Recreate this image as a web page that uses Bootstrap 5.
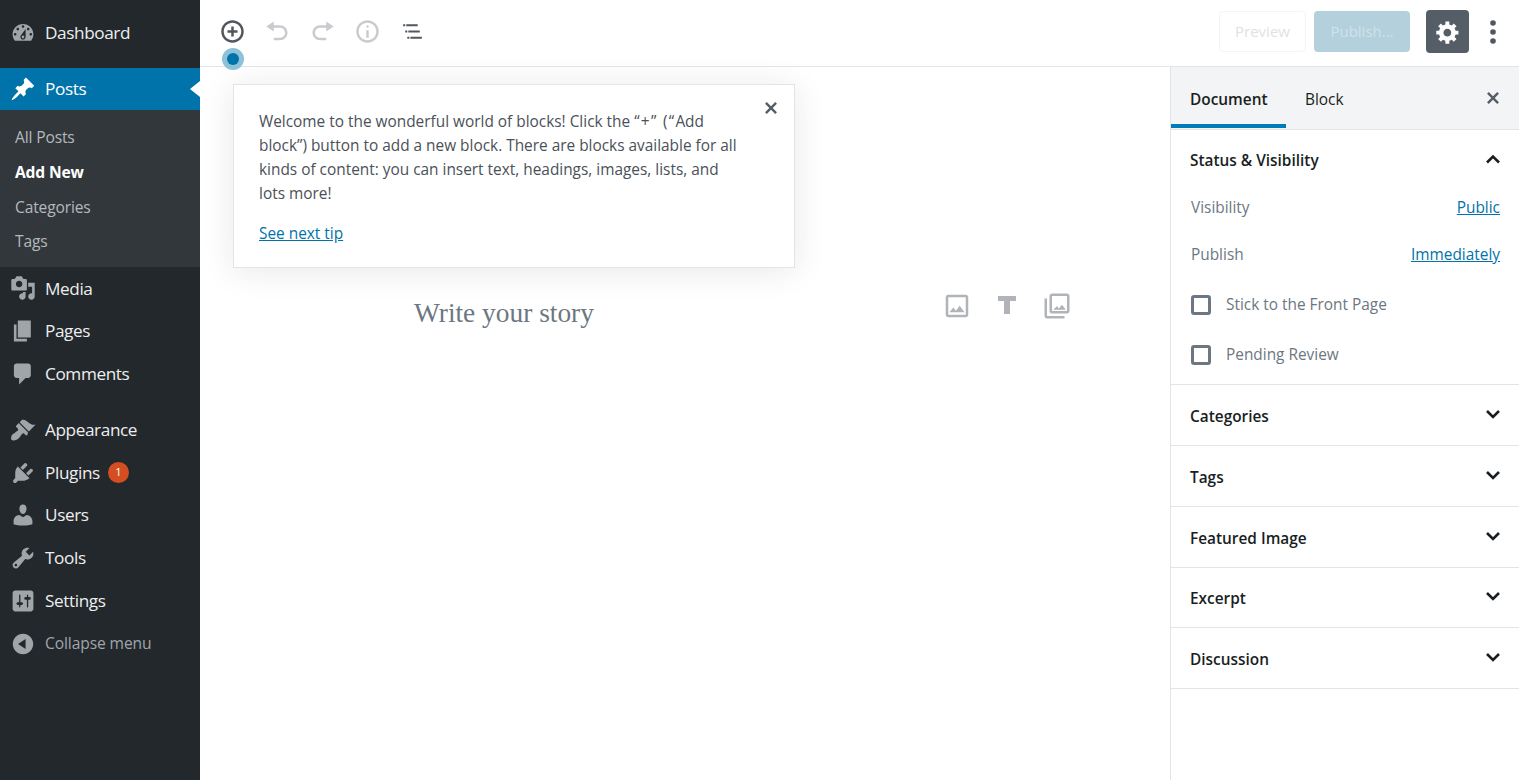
<!DOCTYPE html>
<html lang="en">
<head>
<meta charset="utf-8">
<title>Add New Post</title>
<link href="https://cdn.jsdelivr.net/npm/bootstrap@5.3.0/dist/css/bootstrap.min.css" rel="stylesheet">
<style>
html,body{height:100%;margin:0;overflow:hidden}
body{font-family:"Open Sans","Noto Sans",sans-serif;background:#fff;color:#32373c}
.wp-shell{width:1519px;height:780px}
.wp-side{width:200px;flex:none;background:#23282d;padding-top:12px}
.wp-item{height:42.8px;padding-left:10px;color:#eee;font-size:17.2px;text-decoration:none;letter-spacing:-.4px}
.wp-item.wp-first{height:42px}
.wp-item svg{width:26px;height:26px;fill:#a0a5aa;flex:none;margin-right:9px}
.wp-item.wp-active{background:#0073aa;color:#fff;height:42px;margin-top:14px;position:relative}
.wp-item.wp-active svg{fill:#fff}
.wp-item.wp-active::after{content:"";position:absolute;right:0;top:13px;border:8px solid transparent;border-right-color:#fff;border-left-width:0;border-right-width:10px}
.wp-sub{background:#32373c;padding:10.4px 0 8px 15px;height:157px}
.wp-sub a{display:block;height:34.6px;line-height:34.6px;color:#b4b9be;font-size:15.6px;text-decoration:none;letter-spacing:-.15px}
.wp-sub a.wp-cur{color:#fff;font-weight:700}
.wp-gap{margin-top:13px}
.wp-count{width:21px;height:21px;border-radius:50%;background:#d54e21;color:#fff;font-size:11px;margin-left:8px;letter-spacing:0}
.wp-item.wp-collapse{color:#a0a5aa;font-size:15.6px;letter-spacing:-.1px}
.wp-top{height:67px;border-bottom:1px solid #e2e4e7;flex:none;position:relative;padding:0 16px 0 20px}
.wp-tbtn{width:25px;height:25px;flex:none;margin-right:20px;margin-top:-4px}
.wp-tbtn svg{width:100%;height:100%;display:block}
.wp-dis{fill:#c9cccf}
.wp-dark{fill:#50575e}
.wp-prev{width:87px;height:41px;border:1px solid #f3f4f5;border-radius:4px;color:#e0e2e4;font-size:15px;margin-right:8px;margin-top:-3px}
.wp-pub{width:96px;height:41px;background:#b4d0dc;border-radius:4px;color:#cfe2ea;font-size:15px;margin-right:16px;margin-top:-3px}
.wp-gear{width:43px;height:43px;background:#555d66;border-radius:4px;margin-right:14px;margin-top:-3px}
.wp-gear svg{width:26px;height:26px;fill:#fff}
.wp-more{width:20px;margin-top:-3px}
.wp-beacon{position:absolute;left:22px;top:48px;width:22px;height:22px;border-radius:50%;background:#8dc2d8}
.wp-beacon::after{content:"";position:absolute;left:5px;top:5px;width:12px;height:12px;border-radius:50%;background:#0073aa}
.wp-tip{position:absolute;left:33px;top:84px;width:562px;height:184px;background:#fff;border:1px solid #e2e4e7;box-shadow:0 3px 30px rgba(25,30,35,.1);padding:25px 25px;font-size:15.4px;line-height:24px;color:#4a5158}
.wp-tip a{display:inline-block;margin-top:16px;color:#0073aa}
.wp-quote{letter-spacing:1.3px}
.wp-tip-x{position:absolute;right:11px;top:11px;width:24px;height:24px;fill:#555d66}
.wp-editor{position:relative;padding:232px 98px 0 214px}
.wp-ph{font-family:"Liberation Serif",serif;font-size:27.4px;color:#6c7781;line-height:1;padding-top:1px}
.wp-ins{margin-top:-8px}
.wp-ins svg{width:30px;height:30px;fill:#b0b3b7;display:block;margin-left:20px}
.wp-panel{width:349px;flex:none;border-left:1px solid #e2e4e7;height:100%;position:relative}
.wp-tabs{height:63px;background:#f3f4f5;border-bottom:1px solid #e2e4e7;font-size:15.4px;color:#191e23}
.wp-tab{height:61px;padding:0 19px;line-height:65px;color:#191e23}
.wp-tab.wp-on{font-weight:600;border-bottom:4px solid #007cba;width:115px;white-space:nowrap}
.wp-tabx{position:absolute;right:14px;top:19px;width:24px;height:24px;fill:#555d66}
.wp-sec{border-bottom:1px solid #e2e4e7;height:61px;padding:3px 14px 0 19px;font-size:15.4px;font-weight:600;color:#191e23}
.wp-sec.wp-short{height:60px}
.wp-sec svg{width:24px;height:24px;fill:none;stroke:#191e23;stroke-width:2.6;margin-top:-6px}
.wp-open{height:255px;border-bottom:1px solid #e2e4e7;padding:0 19px 0 19px;font-size:15.4px}
.wp-head{height:61px;font-weight:600;color:#191e23;margin-right:-5px}
.wp-head svg{width:24px;height:24px;fill:none;stroke:#191e23;stroke-width:2.6;margin-top:-3px}
.wp-line{height:47px;color:#6c7781;padding-left:1px;margin-top:-7px;margin-bottom:7px}
.wp-line a{color:#0073aa}
.wp-check{height:50px;color:#6c7781;margin-top:-5px;margin-bottom:5px}
.wp-box{width:20px;height:20px;border:3px solid #6c7781;border-radius:3px;margin-left:1px;margin-right:15px;flex:none}
</style>
</head>
<body>
<div class="wp-shell d-flex">
  <nav class="wp-side d-flex flex-column">
    <a class="wp-item wp-first d-flex align-items-center" href="#"><svg viewBox="0 0 20 20"><path d="M3.76 16h12.48c1.1-1.37 1.76-3.11 1.76-5 0-4.42-3.58-8-8-8s-8 3.58-8 8c0 1.89.66 3.63 1.76 5zM10 4c.55 0 1 .45 1 1s-.45 1-1 1-1-.45-1-1 .45-1 1-1zM6 6c.55 0 1 .45 1 1s-.45 1-1 1-1-.45-1-1 .45-1 1-1zm8 0c.55 0 1 .45 1 1s-.45 1-1 1-1-.45-1-1 .45-1 1-1zm-5.37 5.55L12 7v6c0 1.1-.9 2-2 2s-2-.9-2-2c0-.57.24-1.08.63-1.45zM4 10c.55 0 1 .45 1 1s-.45 1-1 1-1-.45-1-1 .45-1 1-1zm12 0c.55 0 1 .45 1 1s-.45 1-1 1-1-.45-1-1 .45-1 1-1zm-5 3c0-.55-.45-1-1-1s-1 .45-1 1 .45 1 1 1 1-.45 1-1z"/></svg>Dashboard</a>
    <a class="wp-item wp-active d-flex align-items-center" href="#"><svg viewBox="0 0 20 20"><path d="M10.44 3.02l1.82-1.82 6.36 6.35-1.83 1.82c-1.05-.68-2.48-.57-3.41.36l-.75.75c-.92.93-1.04 2.35-.35 3.41l-1.83 1.82-2.41-2.41-2.8 2.79c-.42.42-3.38 2.71-3.8 2.29s1.86-3.39 2.28-3.81l2.79-2.79L4.1 9.36l1.83-1.82c1.05.69 2.48.57 3.4-.36l.75-.75c.93-.92 1.05-2.35.36-3.41z"/></svg>Posts</a>
    <div class="wp-sub">
      <a href="#">All Posts</a>
      <a class="wp-cur" href="#">Add New</a>
      <a href="#">Categories</a>
      <a href="#">Tags</a>
    </div>
    <a class="wp-item d-flex align-items-center" href="#"><svg viewBox="0 0 20 20"><path d="M13 11V4c0-.55-.45-1-1-1h-1.67L9 1H5L3.67 3H2c-.55 0-1 .45-1 1v7c0 .55.45 1 1 1h10c.55 0 1-.45 1-1zM7 4.5c1.38 0 2.5 1.12 2.5 2.5S8.38 9.5 7 9.5 4.5 8.38 4.5 7 5.62 4.5 7 4.5zM14 6h5v10.5c0 1.38-1.12 2.5-2.5 2.5S14 17.88 14 16.5s1.12-2.5 2.5-2.5c.17 0 .34.02.5.05V9h-3V6zm-4 8.05V13h2v3.5c0 1.38-1.12 2.5-2.5 2.5S7 17.88 7 16.5 8.12 14 9.5 14c.17 0 .34.02.5.05z"/></svg>Media</a>
    <a class="wp-item d-flex align-items-center" href="#"><svg viewBox="0 0 20 20"><path d="M6 15V2h10v13H6zm-1 1h8v2H3V5h2v11z"/></svg>Pages</a>
    <a class="wp-item d-flex align-items-center" href="#"><svg viewBox="0 0 20 20"><path d="M5 2h9c1.1 0 2 .9 2 2v7c0 1.1-.9 2-2 2h-2l-5 5v-5H5c-1.1 0-2-.9-2-2V4c0-1.1.9-2 2-2z"/></svg>Comments</a>
    <a class="wp-item wp-gap d-flex align-items-center" href="#"><svg viewBox="0 0 20 20"><path d="M14.48 11.06L7.41 3.99l1.5-1.5c.5-.56 2.3-.47 3.51.32 1.21.8 1.43 1.28 2.91 2.1 1.18.64 2.45 1.26 4.45.85zm-.71.71L6.7 4.7 4.93 6.47c-.39.39-.39 1.02 0 1.41l1.06 1.06c.39.39.39 1.03 0 1.42-.6.6-1.43 1.11-2.21 1.69-.35.26-.7.53-1.01.84C1.43 13.23.28 15.81 1.2 17.68c1.87.92 4.44-.23 5.79-1.58.31-.31.58-.66.85-1.02.57-.78 1.08-1.61 1.69-2.21.39-.39 1.02-.39 1.41 0l1.06 1.06c.39.39 1.02.39 1.41 0z"/></svg>Appearance</a>
    <a class="wp-item d-flex align-items-center" href="#"><svg viewBox="0 0 20 20"><path d="M13.11 4.36L9.87 7.6 8 5.73l3.24-3.24c.35-.34 1.05-.2 1.56.32.52.51.66 1.21.31 1.55zm-8 1.77l.91-1.12 9.01 9.01-1.19.84c-.71.71-2.63 1.16-3.82 1.16H6.14L4.9 17.26c-.59.59-1.54.59-2.12 0-.59-.58-.59-1.53 0-2.12l1.24-1.24v-3.88c0-1.13.4-3.19 1.09-3.89zm7.26 3.97l3.24-3.24c.34-.35 1.04-.21 1.55.31.52.51.66 1.21.31 1.55l-3.24 3.25z"/></svg>Plugins<span class="wp-count d-inline-flex align-items-center justify-content-center">1</span></a>
    <a class="wp-item d-flex align-items-center" href="#"><svg viewBox="0 0 20 20"><path d="M10 9.25c-2.27 0-2.73-3.44-2.73-3.44C7 4.02 7.82 2 9.97 2c2.16 0 2.98 2.02 2.71 3.81 0 0-.41 3.44-2.68 3.44zm0 2.57L12.72 10c2.39 0 4.52 2.33 4.52 4.53v2.49s-3.65 1.13-7.24 1.13c-3.65 0-7.24-1.13-7.24-1.13v-2.49c0-2.25 1.94-4.48 4.47-4.48z"/></svg>Users</a>
    <a class="wp-item d-flex align-items-center" href="#"><svg viewBox="0 0 20 20"><path d="M16.68 9.77c-1.34 1.34-3.3 1.67-4.95.99l-5.41 6.52c-.99.99-2.59.99-3.58 0s-.99-2.59 0-3.57l6.52-5.42c-.68-1.65-.35-3.61.99-4.95 1.28-1.28 3.12-1.62 4.72-1.06l-2.89 2.89 2.82 2.82 2.86-2.87c.53 1.58.18 3.39-1.08 4.65zM3.81 16.21c.4.39 1.04.39 1.43 0 .4-.4.4-1.04 0-1.43-.39-.4-1.03-.4-1.43 0-.39.39-.39 1.03 0 1.43z"/></svg>Tools</a>
    <a class="wp-item d-flex align-items-center" href="#"><svg viewBox="0 0 20 20"><path d="M18 16V4c0-1.1-.9-2-2-2H4c-1.1 0-2 .9-2 2v12c0 1.1.9 2 2 2h12c1.1 0 2-.9 2-2zM8 11h1c.55 0 1 .45 1 1s-.45 1-1 1H8v1.5c0 .28-.22.5-.5.5s-.5-.22-.5-.5V13H6c-.55 0-1-.45-1-1s.45-1 1-1h1V5.5c0-.28.22-.5.5-.5s.5.22.5.5V11zm5-2h-1c-.55 0-1-.45-1-1s.45-1 1-1h1V5.5c0-.28.22-.5.5-.5s.5.22.5.5V7h1c.55 0 1 .45 1 1s-.45 1-1 1h-1v5.5c0 .28-.22.5-.5.5s-.5-.22-.5-.5V9z"/></svg>Settings</a>
    <a class="wp-item wp-collapse d-flex align-items-center" href="#"><svg viewBox="0 0 20 20"><path d="M10 2.16c4.33 0 7.84 3.51 7.84 7.84s-3.51 7.84-7.84 7.84S2.16 14.33 2.16 10 5.71 2.16 10 2.16zm2 11.72V6.12L6.18 9.97z"/></svg>Collapse menu</a>
  </nav>

  <div class="flex-grow-1 d-flex flex-column position-relative" style="min-width:0">
    <header class="wp-top d-flex align-items-center">
      <span class="wp-tbtn"><svg viewBox="0 0 20 20" class="wp-dark"><path d="M10 1c-5 0-9 4-9 9s4 9 9 9 9-4 9-9-4-9-9-9zm0 16c-3.9 0-7-3.1-7-7s3.1-7 7-7 7 3.1 7 7-3.1 7-7 7zm1-11H9v3H6v2h3v3h2v-3h3V9h-3V6z"/></svg></span>
      <span class="wp-tbtn"><svg viewBox="0 0 20 20" class="wp-dis"><path d="M12 5H7V2L1 6l6 4V7h5c2.2 0 4 1.8 4 4s-1.8 4-4 4H7v2h5c3.3 0 6-2.7 6-6s-2.7-6-6-6z"/></svg></span>
      <span class="wp-tbtn"><svg viewBox="0 0 20 20" class="wp-dis"><path d="M8 5h5V2l6 4-6 4V7H8c-2.2 0-4 1.8-4 4s1.8 4 4 4h5v2H8c-3.3 0-6-2.7-6-6s2.7-6 6-6z"/></svg></span>
      <span class="wp-tbtn"><svg viewBox="0 0 20 20" class="wp-dis"><path d="M9 15h2V9H9v6zm1-10c-.5 0-1 .5-1 1s.5 1 1 1 1-.5 1-1-.5-1-1-1zm0-4c-5 0-9 4-9 9s4 9 9 9 9-4 9-9-4-9-9-9zm0 16c-3.9 0-7-3.1-7-7s3.1-7 7-7 7 3.1 7 7-3.1 7-7 7z"/></svg></span>
      <span class="wp-tbtn"><svg viewBox="0 0 24 24" class="wp-dark"><path d="M5 5H3v2h2V5zm3 8h11v-2H8v2zm9-8H6v2h11V5zM7 11H5v2h2v-2zm0 8h2v-2H7v2zm3-2v2h11v-2H10z"/></svg></span>
      <div class="ms-auto d-flex align-items-center">
        <div class="wp-prev d-flex align-items-center justify-content-center">Preview</div>
        <div class="wp-pub d-flex align-items-center justify-content-center">Publish...</div>
        <div class="wp-gear d-flex align-items-center justify-content-center"><svg viewBox="0 0 20 20"><path d="M18 12h-2.18c-.17.7-.44 1.35-.81 1.93l1.54 1.54-2.1 2.1-1.54-1.54c-.58.36-1.23.63-1.91.79V19H8v-2.18c-.68-.16-1.33-.43-1.91-.79l-1.54 1.54-2.12-2.12 1.54-1.54c-.36-.58-.63-1.23-.79-1.91H1V9.03h2.17c.16-.7.44-1.35.8-1.94L2.43 5.55l2.1-2.1 1.54 1.54c.58-.37 1.24-.64 1.93-.81V2h3v2.18c.68.16 1.33.43 1.91.79l1.54-1.54 2.12 2.12-1.54 1.54c.36.59.64 1.24.8 1.94H18V12zm-8.5 1.5c1.66 0 3-1.34 3-3s-1.34-3-3-3-3 1.34-3 3 1.34 3 3 3z"/></svg></div>
        <div class="wp-more"><svg viewBox="0 0 20 26" width="20" height="26" fill="#50575e"><circle cx="10" cy="4" r="2.8"/><circle cx="10" cy="13" r="2.8"/><circle cx="10" cy="22" r="2.8"/></svg></div>
      </div>
      <span class="wp-beacon"></span>
    </header>
    <div class="d-flex flex-grow-1" style="min-height:0">
      <main class="wp-editor flex-grow-1 d-flex align-items-start justify-content-between">
        <div class="wp-ph">Write your story</div>
        <div class="wp-ins d-flex">
          <svg viewBox="0 0 24 24"><path d="M19 5v14H5V5h14m0-2H5c-1.1 0-2 .9-2 2v14c0 1.1.9 2 2 2h14c1.1 0 2-.9 2-2V5c0-1.1-.9-2-2-2z"/><path d="M14.14 11.86l-3 3.87-2.14-2.59-3 3.86h12l-3.86-5.14z"/></svg>
          <svg viewBox="0 0 24 24"><path d="M4.8 4v4h4.8v10.4h4.8V8h4.8V4z"/></svg>
          <svg viewBox="0 0 24 24"><path d="M20 4v12H8V4h12m0-2H8c-1.1 0-2 .9-2 2v12c0 1.1.9 2 2 2h12c1.1 0 2-.9 2-2V4c0-1.1-.9-2-2-2z"/><path d="M12 12l1.4 1.9L16 11l3 4H9z"/><path d="M2 6v14c0 1.1.9 2 2 2h14v-2H4V6H2z"/></svg>
        </div>
      </main>
      <aside class="wp-panel">
        <div class="wp-tabs d-flex">
          <div class="wp-tab wp-on">Document</div>
          <div class="wp-tab">Block</div>
          <svg class="wp-tabx" viewBox="0 0 20 20"><path d="M14.95 6.46L11.41 10l3.54 3.54-1.41 1.41L10 11.42l-3.53 3.53-1.42-1.42L8.58 10 5.05 6.47l1.42-1.42L10 8.58l3.54-3.53z"/></svg>
        </div>
        <section class="wp-open">
          <div class="wp-head d-flex align-items-center justify-content-between">Status &amp; Visibility<svg viewBox="0 0 24 24"><path d="M6 15.5l6-6 6 6"/></svg></div>
          <div class="wp-line d-flex align-items-center justify-content-between"><span>Visibility</span><a href="#">Public</a></div>
          <div class="wp-line d-flex align-items-center justify-content-between"><span>Publish</span><a href="#">Immediately</a></div>
          <div class="wp-check d-flex align-items-center"><span class="wp-box"></span>Stick to the Front Page</div>
          <div class="wp-check d-flex align-items-center"><span class="wp-box"></span>Pending Review</div>
        </section>
        <div class="wp-sec d-flex align-items-center justify-content-between">Categories<svg viewBox="0 0 24 24"><path d="M6 9l6 6 6-6"/></svg></div>
        <div class="wp-sec d-flex align-items-center justify-content-between">Tags<svg viewBox="0 0 24 24"><path d="M6 9l6 6 6-6"/></svg></div>
        <div class="wp-sec d-flex align-items-center justify-content-between">Featured Image<svg viewBox="0 0 24 24"><path d="M6 9l6 6 6-6"/></svg></div>
        <div class="wp-sec wp-short d-flex align-items-center justify-content-between">Excerpt<svg viewBox="0 0 24 24"><path d="M6 9l6 6 6-6"/></svg></div>
        <div class="wp-sec d-flex align-items-center justify-content-between">Discussion<svg viewBox="0 0 24 24"><path d="M6 9l6 6 6-6"/></svg></div>
      </aside>
    </div>
    <div class="wp-tip">
      Welcome to the wonderful world of blocks! Click the <span class="wp-quote">“+” (“</span>Add<br>block”) button to add a new block. There are blocks available for all<br>kinds of content: you can insert text, headings, images, lists, and<br>lots more!<br>
      <a href="#">See next tip</a>
      <svg class="wp-tip-x" viewBox="0 0 20 20"><path d="M14.95 6.46L11.41 10l3.54 3.54-1.41 1.41L10 11.42l-3.53 3.53-1.42-1.42L8.58 10 5.05 6.47l1.42-1.42L10 8.58l3.54-3.53z"/></svg>
    </div>
  </div>
</div>
<script src="https://cdn.jsdelivr.net/npm/bootstrap@5.3.0/dist/js/bootstrap.bundle.min.js"></script>
</body>
</html>
